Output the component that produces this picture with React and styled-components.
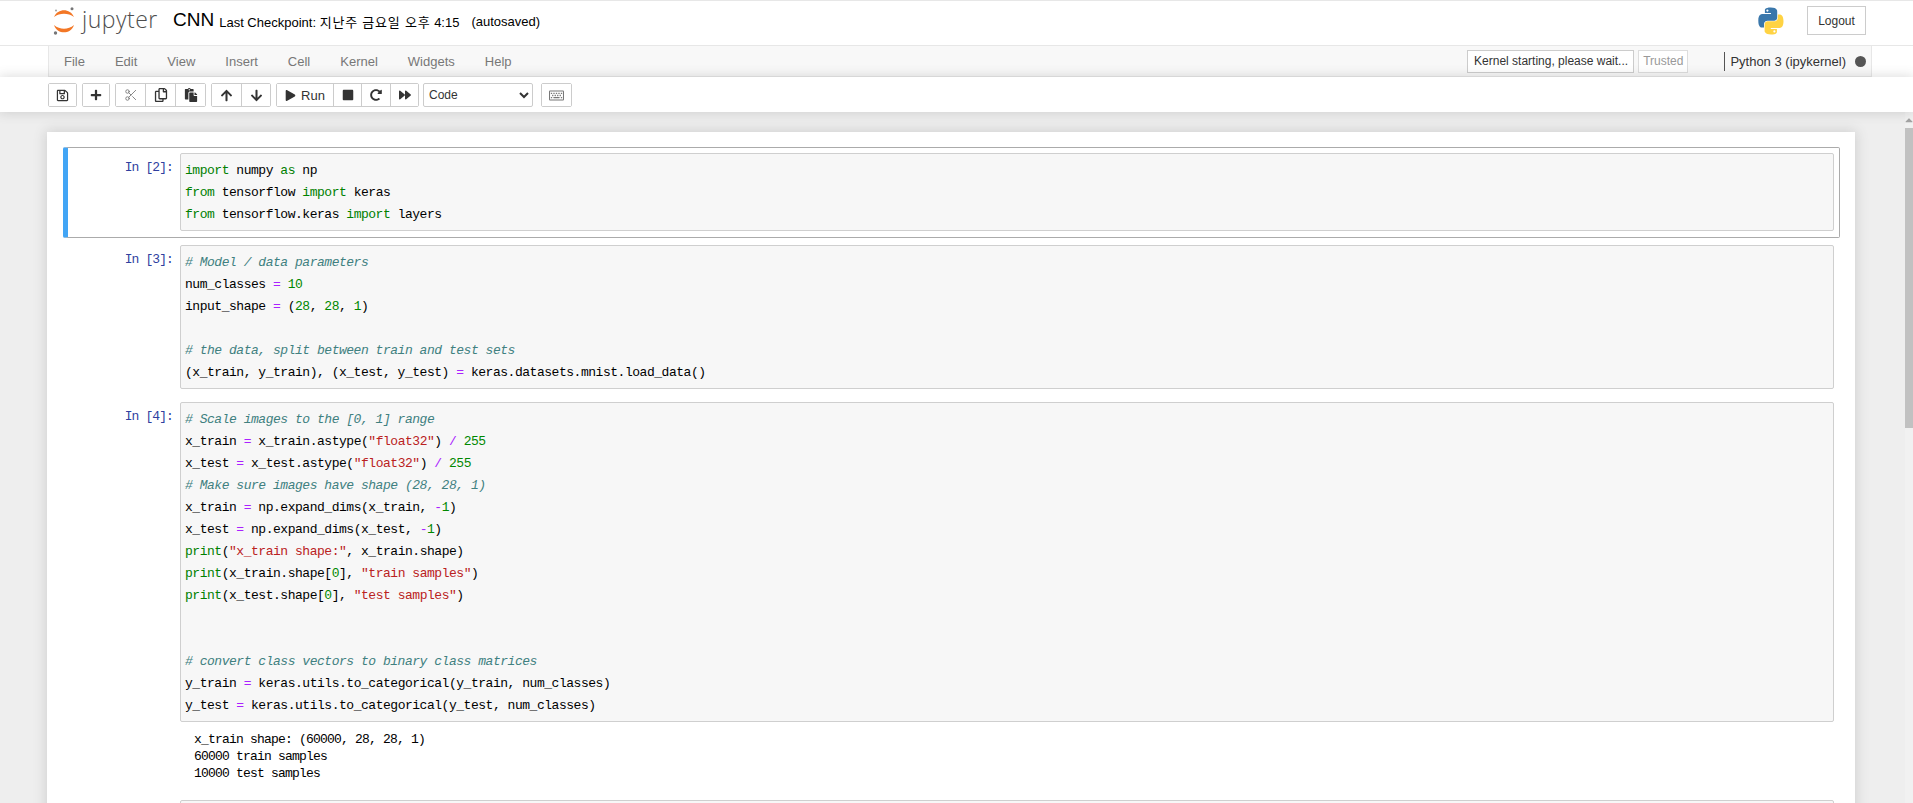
import React from "react";
import styled, { createGlobalStyle } from "styled-components";
import {
	FaRegSave,
	FaPlus,
	FaRegCopy,
	FaPaste,
	FaArrowUp,
	FaArrowDown,
	FaPlay,
	FaStop,
	FaRedoAlt,
	FaForward,
	FaRegKeyboard,
	FaCaretUp,
} from "react-icons/fa";
import { Scissors } from "lucide-react";

const GlobalStyle = createGlobalStyle`
	html, body {
		margin: 0;
		height: 100%;
		overflow: hidden;
		background: #eee;
		font-family: "Liberation Sans", Arial, "Noto Sans CJK KR", sans-serif;
		font-size: 13px;
		color: #000;
	}
`;

const menus = ["File", "Edit", "View", "Insert", "Cell", "Kernel", "Widgets", "Help"];

const cells = [
	{
		n: 2,
		selected: true,
		code: ["import numpy as np", "from tensorflow import keras", "from tensorflow.keras import layers"],
	},
	{
		n: 3,
		code: [
			"# Model / data parameters",
			"num_classes = 10",
			"input_shape = (28, 28, 1)",
			"",
			"# the data, split between train and test sets",
			"(x_train, y_train), (x_test, y_test) = keras.datasets.mnist.load_data()",
		],
	},
	{
		n: 4,
		code: [
			"# Scale images to the [0, 1] range",
			'x_train = x_train.astype("float32") / 255',
			'x_test = x_test.astype("float32") / 255',
			"# Make sure images have shape (28, 28, 1)",
			"x_train = np.expand_dims(x_train, -1)",
			"x_test = np.expand_dims(x_test, -1)",
			'print("x_train shape:", x_train.shape)',
			'print(x_train.shape[0], "train samples")',
			'print(x_test.shape[0], "test samples")',
			"",
			"",
			"# convert class vectors to binary class matrices",
			"y_train = keras.utils.to_categorical(y_train, num_classes)",
			"y_test = keras.utils.to_categorical(y_test, num_classes)",
		],
		output: "x_train shape: (60000, 28, 28, 1)\n60000 train samples\n10000 test samples",
	},
	{ n: null, code: [""] },
];

const TOKENS = /(#.*$)|("[^"]*")|\b(import|from|as)\b|\b(print)\b|\b(\d+)\b|([=/-])/g;

// split one line of python into coloured pieces
function highlight(line) {
	const parts = [];
	let last = 0;
	for (const m of line.matchAll(TOKENS)) {
		if (m.index > last) parts.push(line.slice(last, m.index));
		const key = m.index;
		if (m[1]) parts.push(<Comment key={key}>{m[0]}</Comment>);
		else if (m[2]) parts.push(<Str key={key}>{m[0]}</Str>);
		else if (m[3]) parts.push(<Keyword key={key}>{m[0]}</Keyword>);
		else if (m[4]) parts.push(<Builtin key={key}>{m[0]}</Builtin>);
		else if (m[5]) parts.push(<Num key={key}>{m[0]}</Num>);
		else parts.push(<Op key={key}>{m[0]}</Op>);
		last = m.index + m[0].length;
	}
	parts.push(line.slice(last));
	return parts;
}

function JupyterMark() {
	return (
		<svg width="22" height="28" viewBox="0 0 22 28">
			<path d="M1 10C3 5.300 7 3.200 11 3.200S19 5.300 21 10C18 7.600 14.500 6.700 11 6.700S4 7.600 1 10Z" fill="#f37726" />
			<path d="M1 18C3 23.500 7 25.300 11 25.300S19 23.500 21 18C18 20.700 14.500 21.700 11 21.700S4 20.700 1 18Z" fill="#f37726" />
			<circle cx="19" cy="1.800" r="1.500" fill="#767677" />
			<circle cx="3" cy="3.500" r="1" fill="#9e9e9e" />
			<circle cx="2.500" cy="26" r="1.700" fill="#767677" />
		</svg>
	);
}

function PythonMark() {
	return (
		<svg width="28" height="28" viewBox="0 0 28 28">
			<path
				d="M13.800 0.500C7.500 0.500 7.900 3.200 7.900 3.200V6.100H14V7H5.400C5.400 7 1.300 6.500 1.300 13.700S4.900 20.600 4.900 20.600H7V17.300S6.900 13.700 10.600 13.700H16.800S20.200 13.800 20.200 10.400V4.300S20.700 0.500 13.800 0.500ZM10.400 2.500A1.100 1.100 0 1 1 10.400 4.700A1.100 1.100 0 1 1 10.400 2.500Z"
				fill="#3a77ab"
			/>
			<path
				d="M14 27.500C20.300 27.500 19.900 24.800 19.900 24.800V21.900H13.800V21H22.400C22.400 21 26.500 21.500 26.500 14.300S22.900 7.400 22.900 7.400H20.800V10.700S20.900 14.300 17.200 14.300H11S7.600 14.200 7.600 17.600V23.700S7.100 27.500 14 27.500ZM17.400 25.500A1.100 1.100 0 1 1 17.400 23.300A1.100 1.100 0 1 1 17.400 25.500Z"
				fill="#ffd343"
			/>
		</svg>
	);
}

export default function App() {
	return (
		<Page>
			<GlobalStyle />
			<Header>
				<Logo>
					<JupyterMark />
					<LogoWord>jupyter</LogoWord>
				</Logo>
				<Title>CNN</Title>
				<Checkpoint>
					Last Checkpoint: <Hangul>지난주 금요일 오후</Hangul> 4:15
				</Checkpoint>
				<Autosaved>(autosaved)</Autosaved>
				<HeaderRight>
					<PythonMark />
					<LogoutButton>Logout</LogoutButton>
				</HeaderRight>
			</Header>

			<MenuBar>
				{menus.map((m) => (
					<MenuItem key={m}>{m}</MenuItem>
				))}
				<KernelArea>
					<StatusBox>Kernel starting, please wait...</StatusBox>
					<StatusBox $muted>Trusted</StatusBox>
					<KernelName>Python 3 (ipykernel)</KernelName>
					<KernelDot />
				</KernelArea>
			</MenuBar>

			<ToolBar>
				<BtnGroup>
					<ToolButton $w={27}><FaRegSave size={13} /></ToolButton>
				</BtnGroup>
				<BtnGroup>
					<ToolButton $w={26}><FaPlus size={12} /></ToolButton>
				</BtnGroup>
				<BtnGroup>
					<ToolButton $w={30} $dim><Scissors size={14} strokeWidth={1.5} /></ToolButton>
					<ToolButton $w={30}><FaRegCopy size={14} /></ToolButton>
					<ToolButton $w={29}><FaPaste size={14} /></ToolButton>
				</BtnGroup>
				<BtnGroup>
					<ToolButton $w={30}><FaArrowUp size={13} /></ToolButton>
					<ToolButton $w={28}><FaArrowDown size={13} /></ToolButton>
				</BtnGroup>
				<BtnGroup>
					<ToolButton $w={57}><FaPlay size={11} /> Run</ToolButton>
					<ToolButton $w={28}><FaStop size={12} /></ToolButton>
					<ToolButton $w={29}><FaRedoAlt size={12} /></ToolButton>
					<ToolButton $w={27}><FaForward size={12} /></ToolButton>
				</BtnGroup>
				<CellType defaultValue="Code">
					<option>Code</option>
				</CellType>
				<KeyboardGroup>
					<ToolButton $w={29} $dim><FaRegKeyboard size={15} /></ToolButton>
				</KeyboardGroup>
			</ToolBar>

			<Body>
				<Site>
					<Notebook>
						{cells.map((cell, i) => (
							<Cell key={i} $selected={cell.selected}>
								<InputRow>
									<Prompt>{cell.n ? `In [${cell.n}]:` : ""}</Prompt>
									<CodeBox>
										{cell.code.map((line, j) => (
											<CodeLine key={j}>{highlight(line)}</CodeLine>
										))}
									</CodeBox>
								</InputRow>
								{cell.output && <Output>{cell.output}</Output>}
							</Cell>
						))}
					</Notebook>
				</Site>
				<ScrollBar>
					<ScrollArrow><FaCaretUp size={12} /></ScrollArrow>
					<ScrollThumb />
				</ScrollBar>
			</Body>
		</Page>
	);
}

const Page = styled.div`
	height: 100vh;
	display: flex;
	flex-direction: column;
	overflow: hidden;
	background: #fff;
`;

const Header = styled.header`
	height: 37px;
	flex: none;
	box-sizing: content-box;
	display: flex;
	align-items: center;
	padding: 1px 47px 6px 53px;
	border-top: 1px solid #e7e7e7;
	border-bottom: 1px solid #e7e7e7;
`;

const Logo = styled.div`
	display: flex;
	align-items: center;
	width: 120px;
	gap: 7px;
`;

const LogoWord = styled.span`
	font-family: "Open Sans", sans-serif;
	font-weight: 300;
	font-size: 23px;
	line-height: 28px;
	color: #4e4e4e;
	letter-spacing: 0.5px;
	margin-top: -3px;
`;

const Title = styled.span`
	font-size: 19px;
	line-height: 26px;
	margin-top: -1px;
`;

const Checkpoint = styled.span`
	font-size: 13px;
	margin-left: 5px;
	margin-top: 1px;
	white-space: pre;
`;

const Hangul = styled.span`
	letter-spacing: 0.8px;
`;

const Autosaved = styled.span`
	font-size: 13px;
	margin-left: 12px;
	margin-top: 1px;
`;

const HeaderRight = styled.div`
	margin-left: auto;
	display: flex;
	align-items: center;
	gap: 22px;
`;

const LogoutButton = styled.button`
	width: 59px;
	height: 29px;
	padding: 0;
	background: #fff;
	border: 1px solid #ccc;
	font: inherit;
	font-size: 12px;
	color: #333;
`;

const MenuBar = styled.nav`
	flex: none;
	height: 30px;
	margin: 0 41px 0 48px;
	display: flex;
	align-items: center;
	background: #f8f8f8;
	border: 1px solid #e7e7e7;
	border-top: 0;
`;

const MenuItem = styled.a`
	padding: 0 15px;
	line-height: 29px;
	font-size: 13px;
	color: #777;
`;

const KernelArea = styled.div`
	margin-left: auto;
	display: flex;
	align-items: center;
	padding-right: 5px;
`;

const StatusBox = styled.span`
	height: 21px;
	line-height: 21px;
	padding: ${(p) => (p.$muted ? "0 4px" : "0 5px 0 6px")};
	margin-right: 4px;
	background: #fff;
	border: 1px solid ${(p) => (p.$muted ? "#ddd" : "#ccc")};
	font-size: 12px;
	color: ${(p) => (p.$muted ? "#999" : "#333")};
`;

const KernelName = styled.span`
	margin-left: 32px;
	padding-left: 5px;
	border-left: 1px solid #555;
	line-height: 19px;
	font-size: 13px;
	color: #333;
`;

const KernelDot = styled.span`
	width: 11px;
	height: 11px;
	margin-left: 9px;
	border-radius: 50%;
	background: #555;
`;

const ToolBar = styled.div`
	flex: none;
	position: relative;
	z-index: 2;
	height: 35px;
	padding: 6px 0 0 48px;
	box-sizing: border-box;
	display: flex;
	align-items: flex-start;
	gap: 5px;
	background: #fff;
	box-shadow: 0 0 12px 1px rgba(87, 87, 87, 0.2);
`;

const BtnGroup = styled.div`
	display: flex;
	height: 24px;
	border: 1px solid #ccc;
	border-radius: 2px;
	box-sizing: border-box;
`;

const KeyboardGroup = styled(BtnGroup)`
	margin-left: 3px;
`;

const ToolButton = styled.button`
	width: ${(p) => p.$w}px;
	box-sizing: border-box;
	padding: 0;
	background: #fff;
	border: 0;
	border-right: 1px solid #ccc;
	display: flex;
	align-items: center;
	justify-content: center;
	gap: 5px;
	font: inherit;
	font-size: 13px;
	color: ${(p) => (p.$dim ? "#777" : "#333")};

	&:last-child {
		border-right: 0;
	}
`;

const CellType = styled.select`
	width: 110px;
	height: 24px;
	padding: 0 0 0 1px;
	background: #fff;
	border: 1px solid #ccc;
	border-radius: 2px;
	font: inherit;
	font-size: 12px;
	color: #333;
	margin-left: -1px;
`;

const Body = styled.div`
	flex: 1;
	min-height: 0;
	display: flex;
	background: #eee;
`;

const Site = styled.main`
	flex: 1;
	min-width: 0;
	overflow: hidden;
	padding: 20px 50px 0 47px;
`;

const Notebook = styled.div`
	background: #fff;
	padding: 15px 15px 15px 16px;
	box-shadow: 0 0 12px 1px rgba(87, 87, 87, 0.2);
	display: flex;
	flex-direction: column;
	gap: 1px;
	min-height: 800px;
`;

const Cell = styled.div`
	padding: 5px 5px ${(p) => (p.$selected ? "6px" : "5px")};
	border: 1px solid ${(p) => (p.$selected ? "#ababab" : "transparent")};
	border-left: 5px solid ${(p) => (p.$selected ? "#42a5f5" : "transparent")};
	border-radius: 2px;
`;

const InputRow = styled.div`
	display: flex;
`;

const Prompt = styled.div`
	width: 107px;
	flex: none;
	box-sizing: border-box;
	padding: 6px 7px 0 0;
	text-align: right;
	font-family: "Liberation Mono", monospace;
	font-size: 13px;
	letter-spacing: -0.9px;
	line-height: 17px;
	color: #303f9f;
`;

const CodeBox = styled.div`
	flex: 1;
	padding: 6px 4px 4px;
	background: #f7f7f7;
	border: 1px solid #cfcfcf;
	border-radius: 2px;
`;

const CodeLine = styled.div`
	height: 22px;
	font-family: "Liberation Mono", monospace;
	font-size: 13px;
	letter-spacing: -0.47px;
	line-height: 22px;
	white-space: pre;
	color: #000;
`;

const Keyword = styled.span`
	color: #008000;
`;

const Builtin = styled.span`
	color: #008000;
`;

const Comment = styled.span`
	color: #408080;
	font-style: italic;
`;

const Str = styled.span`
	color: #ba2121;
`;

const Num = styled.span`
	color: #080;
`;

const Op = styled.span`
	color: #a2f;
`;

const Output = styled.pre`
	margin: 9px 0 5px 121px;
	font-family: "Liberation Mono", monospace;
	font-size: 13px;
	letter-spacing: -0.8px;
	line-height: 17px;
	color: #000;
`;

const ScrollBar = styled.div`
	width: 8px;
	flex: none;
	display: flex;
	flex-direction: column;
	background: #f1f1f1;
`;

const ScrollArrow = styled.div`
	height: 16px;
	display: flex;
	align-items: center;
	justify-content: center;
	color: #a3a3a3;
	overflow: hidden;
`;

const ScrollThumb = styled.div`
	height: 300px;
	background: #c1c1c1;
`;
